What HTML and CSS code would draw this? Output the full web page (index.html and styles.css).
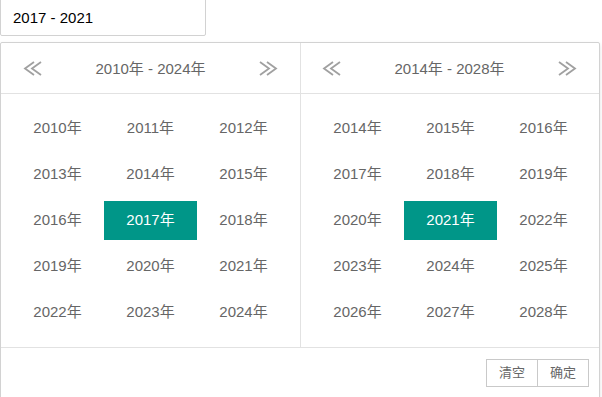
FILE: index.html
```html
<!DOCTYPE html>
<html lang="zh-CN">
<head>
    <meta charset="UTF-8">
    <meta name="viewport" content="width=device-width, initial-scale=1.0">
    <title>年范围选择</title>
    <link rel="stylesheet" href="styles.css">
</head>
<body>
    <input class="date-input" type="text" value="2017 - 2021" readonly>

    <div class="laydate">
        <div class="laydate-main">
            <div class="laydate-panel">
                <div class="laydate-header">
                    <span class="laydate-arrow">
                        <svg width="19" height="15" viewBox="0 0 19 15"><path d="M11 1 L2 7.5 L11 14 M18 1 L9 7.5 L18 14"/></svg>
                    </span>
                    <span class="laydate-title">2010年 - 2024年</span>
                    <span class="laydate-arrow">
                        <svg width="19" height="15" viewBox="0 0 19 15"><path d="M1 1 L10 7.5 L1 14 M8 1 L17 7.5 L8 14"/></svg>
                    </span>
                </div>
                <ul class="year-list">
                    <li>2010年</li><li>2011年</li><li>2012年</li>
                    <li>2013年</li><li>2014年</li><li>2015年</li>
                    <li>2016年</li><li class="selected">2017年</li><li>2018年</li>
                    <li>2019年</li><li>2020年</li><li>2021年</li>
                    <li>2022年</li><li>2023年</li><li>2024年</li>
                </ul>
            </div>

            <div class="laydate-panel laydate-panel-right">
                <div class="laydate-header">
                    <span class="laydate-arrow">
                        <svg width="19" height="15" viewBox="0 0 19 15"><path d="M11 1 L2 7.5 L11 14 M18 1 L9 7.5 L18 14"/></svg>
                    </span>
                    <span class="laydate-title">2014年 - 2028年</span>
                    <span class="laydate-arrow">
                        <svg width="19" height="15" viewBox="0 0 19 15"><path d="M1 1 L10 7.5 L1 14 M8 1 L17 7.5 L8 14"/></svg>
                    </span>
                </div>
                <ul class="year-list">
                    <li>2014年</li><li>2015年</li><li>2016年</li>
                    <li>2017年</li><li>2018年</li><li>2019年</li>
                    <li>2020年</li><li class="selected">2021年</li><li>2022年</li>
                    <li>2023年</li><li>2024年</li><li>2025年</li>
                    <li>2026年</li><li>2027年</li><li>2028年</li>
                </ul>
            </div>
        </div>

        <div class="laydate-footer">
            <span class="laydate-btn">清空</span><span class="laydate-btn">确定</span>
        </div>
    </div>
</body>
</html>
```

FILE: styles.css
```css
* {
    box-sizing: border-box;
}

body {
    margin: 0;
    font-family: "Liberation Sans", Arial, "Noto Sans CJK SC", sans-serif;
    font-size: 15px;
    color: #666;
    background: #fff;
}

.date-input {
    display: block;
    width: 206px;
    height: 38px;
    margin-top: -2px;
    padding: 0 12px;
    border: 1px solid #d2d2d2;
    border-radius: 2px;
    font-family: inherit;
    font-size: 15px;
    color: #000;
    outline: none;
}

.laydate {
    width: 600px;
    margin-top: 6px;
    border: 1px solid #d2d2d2;
    border-radius: 2px;
    box-shadow: 0 2px 4px rgba(0, 0, 0, 0.12);
    background: #fff;
}

.laydate-main {
    display: flex;
}

.laydate-panel {
    width: 299px;
}

.laydate-panel-right {
    border-left: 1px solid #e2e2e2;
}

.laydate-header {
    display: flex;
    align-items: center;
    justify-content: space-between;
    height: 51px;
    padding: 0 22px 0 22px;
    border-bottom: 1px solid #e2e2e2;
}

.laydate-panel-right .laydate-header {
    padding: 0 22px 0 21px;
}

.laydate-title {
    color: #666;
    padding-bottom: 1px;
}

.laydate-arrow {
    display: flex;
    width: 19px;
    height: 15px;
    cursor: pointer;
}

.laydate-arrow path {
    fill: none;
    stroke: #a0a0a0;
    stroke-width: 1.8;
}

.year-list {
    display: grid;
    grid-template-columns: repeat(3, 1fr);
    row-gap: 7px;
    margin: 0;
    padding: 15px 10px;
    list-style: none;
}

.laydate-panel-right .year-list {
    padding: 15px 9px 15px 10px;
}

.year-list li {
    height: 39px;
    line-height: 38px;
    text-align: center;
    cursor: pointer;
}

.year-list li.selected {
    background-color: #009688;
    color: #fff;
}

.laydate-footer {
    display: flex;
    justify-content: flex-end;
    padding: 11px 10px 12px;
    border-top: 1px solid #e2e2e2;
}

.laydate-btn {
    display: inline-block;
    height: 28px;
    line-height: 26px;
    padding: 0 12px;
    border: 1px solid #c9c9c9;
    font-size: 13px;
    color: #666;
    background: #fff;
    cursor: pointer;
}

.laydate-btn + .laydate-btn {
    margin-left: -1px;
}
```
